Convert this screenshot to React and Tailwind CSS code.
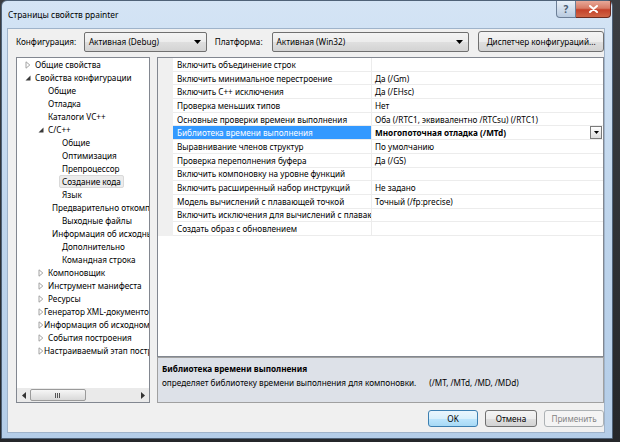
import React from 'react';

const treeItems = [
  { level: 0, arrow: 'closed', text: 'Общие свойства' },
  { level: 0, arrow: 'open', text: 'Свойства конфигурации' },
  { level: 1, text: 'Общие' },
  { level: 1, text: 'Отладка' },
  { level: 1, text: 'Каталоги VC++' },
  { level: 1, arrow: 'open', text: 'C/C++' },
  { level: 2, text: 'Общие' },
  { level: 2, text: 'Оптимизация' },
  { level: 2, text: 'Препроцессор' },
  { level: 2, text: 'Создание кода', selected: true },
  { level: 2, text: 'Язык' },
  { level: 2, text: 'Предварительно откомпилированные заголовки' },
  { level: 2, text: 'Выходные файлы' },
  { level: 2, text: 'Информация об исходных файлах' },
  { level: 2, text: 'Дополнительно' },
  { level: 2, text: 'Командная строка' },
  { level: 1, arrow: 'closed', text: 'Компоновщик' },
  { level: 1, arrow: 'closed', text: 'Инструмент манифеста' },
  { level: 1, arrow: 'closed', text: 'Ресурсы' },
  { level: 1, arrow: 'closed', text: 'Генератор XML-документов' },
  { level: 1, arrow: 'closed', text: 'Информация об исходном коде' },
  { level: 1, arrow: 'closed', text: 'События построения' },
  { level: 1, arrow: 'closed', text: 'Настраиваемый этап построения' },
];

const indent = ['pl-[8px]', 'pl-[21px]', 'pl-[35px]'];

const props = [
  ['Включить объединение строк', ''],
  ['Включить минимальное перестроение', 'Да (/Gm)'],
  ['Включить C++ исключения', 'Да (/EHsc)'],
  ['Проверка меньших типов', 'Нет'],
  ['Основные проверки времени выполнения', 'Оба (/RTC1, эквивалентно /RTCsu) (/RTC1)'],
  ['Библиотека времени выполнения', 'Многопоточная отладка (/MTd)', true],
  ['Выравнивание членов структур', 'По умолчанию'],
  ['Проверка переполнения буфера', 'Да (/GS)'],
  ['Включить компоновку на уровне функций', ''],
  ['Включить расширенный набор инструкций', 'Не задано'],
  ['Модель вычислений с плавающей точкой', 'Точный (/fp:precise)'],
  ['Включить исключения для вычислений с плавающей точкой', ''],
  ['Создать образ с обновлением', ''],
];

const DownArrow = () => (
  <svg width="7" height="4" viewBox="0 0 7 4">
    <path d="M0 0 H7 L3.5 4 Z" fill="#000" />
  </svg>
);

const TreeArrow = ({ kind }) => {
  if (kind === 'open') {
    return (
      <svg width="6" height="6" viewBox="0 0 6 6">
        <path d="M5.5 0.5 V5.5 H0.5 Z" fill="#3a3a3a" />
      </svg>
    );
  }
  if (kind === 'closed') {
    return (
      <svg width="6" height="8" viewBox="0 0 6 8">
        <path d="M1 0.8 L4.8 4 L1 7.2 Z" fill="#fff" stroke="#a2a2a2" strokeWidth="1" />
      </svg>
    );
  }
  return null;
};

const Combo = ({ text, wide }) => (
  <div
    className={
      (wide ? 'w-[198px] ' : 'w-[123px] ') +
      'h-[20px] flex items-center justify-between pl-[4px] pr-[5px] border border-[#707070] rounded-[2px] bg-linear-[180deg,#f4f4f4_0%,#ececec_50%,#dfdfdf_51%,#d3d3d3_100%]'
    }
  >
    <span>{text}</span>
    <DownArrow />
  </div>
);

export default function App() {
  return (
    <div className="w-[620px] h-[442px] bg-linear-to-b from-[#3b3e43] to-[#25272a] overflow-hidden font-['Noto_Sans',sans-serif] text-[8.2px] leading-[13px] text-black">
      <div className="ml-[1px] w-[612px] h-[439px] flex flex-col border border-[#4f6278] rounded-t-[6px] bg-linear-to-b from-[#d4e4f5] via-[#bfd5ec] to-[#b4cde8]">
        {/* title bar */}
        <div className="h-[27px] flex items-start">
          <div className="pl-[6px] pt-[7px] text-[8.4px]">Страницы свойств ppainter</div>
          <div className="ml-auto mr-[1px] flex">
            <div className="w-[20px] h-[17px] flex items-center justify-center border border-t-0 border-[#6c7f97] rounded-bl-[4px] bg-linear-to-b from-[#e9f0f8] to-[#b9cbe0] text-[#4a5a70] text-[10px] font-bold">
              ?
            </div>
            <div className="w-[35px] h-[17px] flex items-center justify-center border border-t-0 border-l-0 border-[#6b2a1f] rounded-br-[4px] bg-linear-[180deg,#e8a898_0%,#d77b66_45%,#c4412a_55%,#cf6546_100%]">
              <svg width="9" height="8" viewBox="0 0 9 8">
                <path d="M1 1 L8 7 M8 1 L1 7" stroke="#fff" strokeWidth="2" strokeLinecap="round" />
              </svg>
            </div>
          </div>
        </div>

        {/* client */}
        <div className="ml-[5px] w-[598px] h-[405px] border border-[#9fb3ca] bg-[#f0f0f0] flex flex-col">
          <div className="mt-[2px] h-[21px] flex items-center pl-[8px]">
            <div className="w-[68px]">Конфигурация:</div>
            <Combo text="Активная (Debug)" />
            <div className="ml-[8px] w-[57px]">Платформа:</div>
            <Combo text="Активная (Win32)" wide />
            <div className="ml-[9px] w-[126px] h-[21px] flex items-center justify-center border border-[#707070] rounded-[3px] bg-linear-[180deg,#f4f4f4_0%,#ececec_50%,#dfdfdf_51%,#d3d3d3_100%]">
              Диспетчер конфигураций...
            </div>
          </div>

          <div className="mt-[5px] h-[346px] flex pl-[8px]">
            {/* tree */}
            <div className="w-[134px] h-full border border-[#828790] bg-white flex flex-col">
              <div className="flex-1 overflow-hidden">
                {treeItems.map((it, i) => (
                  <div key={i} className={'h-[13px] flex items-center whitespace-nowrap ' + indent[it.level]}>
                    <div className="w-[10px] flex items-center">
                      <TreeArrow kind={it.arrow} />
                    </div>
                    {it.selected ? (
                      <span className="-ml-[3px] px-[2px] h-[13px] border border-[#d9d9d9] rounded-[2px] bg-[#ececec] leading-[11px]">
                        {it.text}
                      </span>
                    ) : (
                      <span>{it.text}</span>
                    )}
                  </div>
                ))}
              </div>
              <div className="h-[14px] flex items-center bg-[#eaeaea]">
                <div className="w-[13px] flex justify-center">
                  <svg width="4" height="7" viewBox="0 0 4 7">
                    <path d="M4 0 V7 L0 3.5 Z" fill="#333" />
                  </svg>
                </div>
                <div className="w-[56px] h-[12px] flex items-center justify-center border border-[#9a9a9a] rounded-[2px] bg-linear-to-b from-[#f6f6f6] to-[#d9d9d9]">
                  <svg width="6" height="5" viewBox="0 0 6 5">
                    <path d="M0.5 0 V5 M2.5 0 V5 M4.5 0 V5" stroke="#555" strokeWidth="1" />
                  </svg>
                </div>
                <div className="ml-auto w-[13px] flex justify-center">
                  <svg width="4" height="7" viewBox="0 0 4 7">
                    <path d="M0 0 V7 L4 3.5 Z" fill="#333" />
                  </svg>
                </div>
              </div>
            </div>

            {/* property grid + description */}
            <div className="ml-[7px] w-[447px] h-full flex flex-col">
              <div className="h-[300px] border border-[#828790] bg-white overflow-hidden">
                {props.map(([name, value, sel], i) => (
                  <div key={i} className="h-[13.7px] flex whitespace-nowrap">
                    <div className="w-[15px] bg-[#f0f0f0]" />
                    <div
                      className={
                        'w-[199px] overflow-hidden pl-[4px] border-r border-b border-[#ececec] flex items-center ' +
                        (sel ? 'bg-[#3399ff] text-white' : '')
                      }
                    >
                      {name}
                    </div>
                    <div className="flex-1 flex items-center pl-[3px] border-b border-[#ececec]">
                      <span className={sel ? 'font-bold' : ''}>{value}</span>
                      {sel && (
                        <div className="ml-auto mr-[1px] w-[12px] h-[13px] flex items-center justify-center border border-[#7a7a7a] bg-linear-to-b from-[#ffffff] to-[#dcdcdc]">
                          <svg width="5" height="3" viewBox="0 0 5 3">
                            <path d="M0 0 H5 L2.5 3 Z" fill="#000" />
                          </svg>
                        </div>
                      )}
                    </div>
                  </div>
                ))}
              </div>
              <div className="h-[46px] border border-[#a0a0a0] bg-[#dde1e8] pl-[4px] pt-[4px]">
                <div className="font-bold">Библиотека времени выполнения</div>
                <div className="mt-[1px] whitespace-nowrap">
                  определяет библиотеку времени выполнения для компоновки.
                  <span className="ml-[13px]">(/MT, /MTd, /MD, /MDd)</span>
                </div>
              </div>
            </div>
          </div>

          <div className="mt-[7px] h-[17px] flex justify-end">
            <div className="w-[50px] h-[17px] flex items-center justify-center border border-[#3c7fb1] rounded-[3px] bg-linear-[180deg,#eaf6fd_0%,#d9f0fc_50%,#bee6fd_51%,#a7d9f5_100%]">
              OK
            </div>
            <div className="ml-[7px] w-[52px] h-[17px] flex items-center justify-center border border-[#707070] rounded-[3px] bg-linear-[180deg,#f4f4f4_0%,#ececec_50%,#dfdfdf_51%,#d3d3d3_100%]">
              Отмена
            </div>
            <div className="ml-[7px] w-[60px] h-[17px] flex items-center justify-center border border-[#adb2b5] rounded-[3px] bg-[#f4f4f4] text-[#838383]">
              Применить
            </div>
          </div>
        </div>
      </div>
    </div>
  );
}
